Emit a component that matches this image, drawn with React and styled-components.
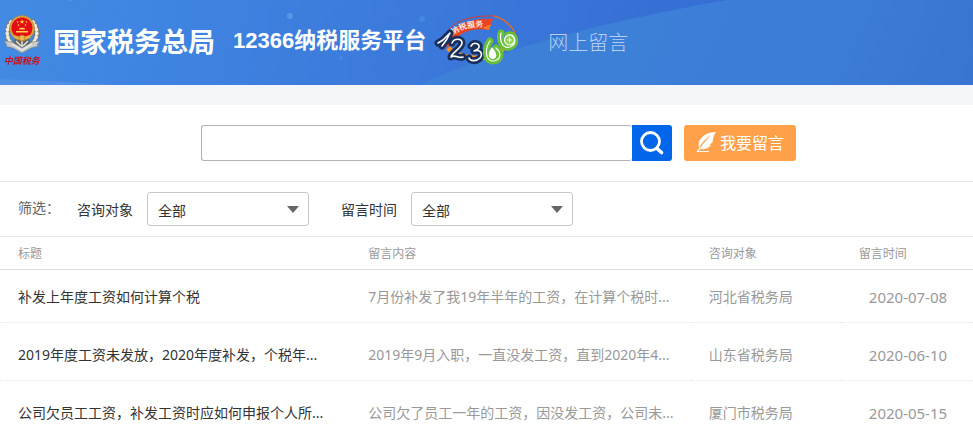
import React, { useState } from 'react'
import styled, { createGlobalStyle } from 'styled-components'

const GlobalStyle = createGlobalStyle`
    * {
        box-sizing: border-box;
    }

    body {
        margin: 0;
        background-color: #fff;
        color: #333;
        font-family: "Noto Sans", "Noto Sans CJK SC", sans-serif;
        font-size: 14px;
    }
`

const Header = styled.header`
    position: relative;
    display: flex;
    align-items: center;
    height: 85px;
    padding-bottom: 4px;
    overflow: hidden;
    background-color: #3c7edd;
`

// decoration behind the header content
const Waves = styled.svg`
    position: absolute;
    inset: 0;
    width: 100%;
    height: 100%;
`

const Brand = styled.a`
    position: relative;
    display: flex;
    align-items: center;
    padding-left: 3px;
    color: #fff;
    text-decoration: none;
    white-space: nowrap;
`

const Bureau = styled.span`
    margin-left: 12px;
    font-family: "Noto Sans CJK SC", sans-serif;
    font-size: 27px;
    font-weight: 700;
    line-height: 40px;
`

const Platform = styled.span`
    margin: 0 8px 0 18px;
    font-family: "Liberation Sans", "Noto Sans CJK SC", sans-serif;
    font-size: 22px;
    font-weight: 700;
    line-height: 40px;
`

const PageName = styled.h1`
    position: relative;
    margin: 0 0 0 28px;
    padding-top: 2px;
    color: #b4cff2;
    font-family: "Noto Sans CJK SC", sans-serif;
    font-size: 20px;
    font-weight: 300;
    line-height: 40px;
    white-space: nowrap;
`

const Main = styled.main`
    border-top: 20px solid #f4f5f8;
`

const SearchForm = styled.form`
    display: flex;
    justify-content: center;
    gap: 12px;
    padding: 20px 0 20px 24px;
    border-bottom: 1px solid #e4e4e4;
`

const SearchBox = styled.div`
    display: flex;
    width: 471px;
`

const SearchInput = styled.input`
    flex: 1;
    min-width: 0;
    height: 36px;
    padding: 0 10px;
    border: 1px solid #b2b2b2;
    border-right: 0;
    border-radius: 3px;
    background-color: #fff;
    font: inherit;
    outline: none;
`

const SearchButton = styled.button`
    width: 40px;
    height: 36px;
    padding: 0;
    border: 0;
    border-radius: 0 3px 3px 0;
    background-color: #0166ea;
    cursor: pointer;

    svg {
        display: block;
    }
`

const MessageButton = styled.button`
    display: flex;
    align-items: center;
    justify-content: center;
    gap: 3px;
    width: 112px;
    height: 36px;
    padding: 0 0 2px;
    border: 0;
    border-radius: 3px;
    background-color: #ffa04b;
    color: #fff;
    font-family: "Noto Sans CJK SC", sans-serif;
    font-size: 16px;
    line-height: 24px;
    cursor: pointer;
`

const Filters = styled.div`
    display: flex;
    align-items: center;
    height: 55px;
    padding: 0 18px;
    border-bottom: 1px solid #e4e4e4;
`

const FilterTitle = styled.span`
    margin-right: 17px;
    padding-bottom: 2px;
    color: #666;
    line-height: 20px;
`

const Field = styled.label`
    display: flex;
    align-items: center;
    gap: 14px;
    margin-right: 32px;
    line-height: 20px;
    white-space: nowrap;
`

const FieldName = styled.span`
    padding-top: 2px;
`

const SelectWrap = styled.span`
    position: relative;
    display: block;

    svg {
        position: absolute;
        top: 14px;
        right: 10px;
        pointer-events: none;
    }
`

const Select = styled.select`
    display: block;
    width: 162px;
    height: 34px;
    padding: 4px 30px 0 10px;
    border: 1px solid #c8c8c8;
    border-radius: 3px;
    background-color: #fff;
    color: #333;
    font: inherit;
    appearance: none;
`

const Table = styled.table`
    width: 100%;
    table-layout: fixed;
    border-collapse: separate;
    border-spacing: 0;
`

const Th = styled.th`
    width: ${props => props.$width};
    height: 33px;
    padding: 2px 0 0 18px;
    border-bottom: 1px solid #dcdcdc;
    color: #999;
    font-size: 12px;
    font-weight: 400;
    line-height: 20px;
    text-align: left;
`

const Td = styled.td`
    padding: 22px 0 15px 18px;
    border-bottom: 1px dotted #e8e8e8;
    color: #999;
    line-height: 20px;
    white-space: nowrap;

    tr:first-child > & {
        padding-top: 17px;
    }
`

const DateTd = styled(Td)`
    padding-left: 28px;
    font-size: 15px;
`

const TitleLink = styled.a`
    color: #333;
    text-decoration: none;

    &:hover {
        color: #0166ea;
    }
`

const messages = [
    {
        title: '补发上年度工资如何计算个税',
        content: '7月份补发了我19年半年的工资，在计算个税时...',
        target: '河北省税务局',
        date: '2020-07-08',
    },
    {
        title: '2019年度工资未发放，2020年度补发，个税年...',
        content: '2019年9月入职，一直没发工资，直到2020年4...',
        target: '山东省税务局',
        date: '2020-06-10',
    },
    {
        title: '公司欠员工工资，补发工资时应如何申报个人所...',
        content: '公司欠了员工一年的工资，因没发工资，公司未...',
        target: '厦门市税务局',
        date: '2020-05-15',
    },
]

function HeaderWaves() {
    return (
        <Waves viewBox="0 0 973 85" preserveAspectRatio="none" aria-hidden="true">
            <defs>
                <linearGradient id="sky" gradientUnits="userSpaceOnUse" x1="40" y1="-60" x2="600" y2="150">
                    <stop offset="0" stopColor="#428ae4" />
                    <stop offset="1" stopColor="#3770d5" />
                </linearGradient>
                <linearGradient id="hill" gradientUnits="userSpaceOnUse" x1="640" y1="0" x2="960" y2="140">
                    <stop offset="0" stopColor="#3d80d8" />
                    <stop offset="0.6" stopColor="#3b7cd6" />
                    <stop offset="1" stopColor="#3873d2" />
                </linearGradient>
            </defs>
            <rect width="973" height="85" fill="url(#sky)" />
            <path d="M418 85C500 50 600 22 728 0H973V85Z" fill="url(#hill)" />
            <path d="M0 79Q60 81 115 85H0Z" fill="#4f8fe5" />
            <g fill="#5aa2ec">
                <circle cx="290" cy="16" r="3" opacity="0.7" />
                <circle cx="422" cy="19" r="3" opacity="0.35" />
                <circle cx="341" cy="58" r="2" opacity="0.4" />
                <circle cx="70" cy="0" r="2" opacity="0.5" />
            </g>
        </Waves>
    )
}

// tax bureau emblem with the red lettering below it
function Emblem() {
    return (
        <svg width="38" height="54" viewBox="0 0 38 54" aria-hidden="true">
            <g fill="none" strokeLinecap="round">
                <path d="M8 8C2 16 3 27 12 32M30 8C36 16 35 27 26 32" stroke="#77766f" strokeWidth="5" />
                <path d="M8 8C2 16 3 27 12 32M30 8C36 16 35 27 26 32" stroke="#eeeade" strokeWidth="3.6" strokeDasharray="0.6 3.4" />
            </g>
            <path d="M12 24H26L28 33H10Z" fill="#5f625f" />
            <path d="M13 27l5 5M25 27l-5 5M19 26v7" stroke="#e5e1d3" strokeWidth="1.5" />
            <path d="M1 27l8 1 10 6 10-6 8-1-3 4 2 1-8 2-9 5-9-5-8-2 2-1z" fill="#c9cbc8" stroke="#777d80" strokeWidth="0.6" />
            <path d="M9 30l10 6 10-6" fill="none" stroke="#f1f0e9" strokeWidth="1.2" />
            <circle cx="19" cy="14" r="12.5" fill="#d6a73d" stroke="#a88445" strokeWidth="0.6" />
            <circle cx="19" cy="14" r="10.6" fill="#e60d12" />
            <path d="M19 5.5l.7 1.500 1.600.1-1.300 1 .5 1.600-1.500-1-1.500 1 .5-1.600-1.300-1 1.600-.1z" fill="#ffd64b" />
            <g fill="#ffd64b">
                <circle cx="14.5" cy="8" r="0.8" />
                <circle cx="23.5" cy="8" r="0.8" />
                <circle cx="15.5" cy="11" r="0.8" />
                <circle cx="22.5" cy="11" r="0.8" />
                <path d="M16 14.500l3-1 3 1v1h-6zM13 17h12v1.500H13z" />
            </g>
            <path d="M11 21q8 3 16 0v3q-8 3-16 0z" fill="#e7b040" />
            <circle cx="19" cy="24" r="3" fill="#e9b84b" stroke="#a37126" strokeWidth="0.6" />
            <text x="1" y="50" fill="#c71120" fontFamily="Noto Sans CJK SC, sans-serif" fontSize="9" fontWeight="700" fontStyle="italic">中国税务</text>
        </svg>
    )
}

// 12366 hotline logo
function HotlineLogo() {
    const digits = 'M4 28L9 25L16 18L13 24L8 31M18 28C20 23 28 23 28 28C28 33 17 38 17 42C21 39 25 44 29 42M37 31C40 26 48 29 44 34L40 36C47 34 49 39 46 43C42 47 36 46 35 43'
    const sixes = 'M56 26C51 33 51 45 58 46C67 46 68 38 62 33M67 18C65 26 69 34 76 32C84 29 81 18 74 20'

    return (
        <svg width="86" height="52" viewBox="0 0 86 52" aria-hidden="true">
            <path d="M10 24C14 8 32 0 62 1" fill="none" stroke="#d93b33" strokeWidth="1" />
            <path d="M60 1C70 4 77 9 81 18" fill="none" stroke="#e06a30" strokeWidth="1.5" />
            <path d="M10 32C9 14 34 2 59 4L55 15C38 12 22 18 17 31Z" fill="#ea4323" />
            <path d="M48 13L57 9L55 15Z" fill="#f47a30" />
            <path d="M14 33C24 44 52 47 67 36L76 24" fill="none" stroke="#ff8d16" strokeWidth="5" />
            <path d="M26 42C38 46 54 45 66 39" fill="none" stroke="#fff" strokeWidth="0.8" />
            <path id="ribbon" d="M19 20Q33 10 56 12" fill="none" />
            <text fill="#fff" fontFamily="Noto Sans CJK SC, sans-serif" fontSize="8" fontWeight="500">
                <textPath href="#ribbon">纳税服务</textPath>
            </text>
            <g fill="none" strokeLinecap="round" strokeLinejoin="round">
                <path d={digits} stroke="#172f5d" strokeWidth="7" />
                <path d={digits} stroke="#fff" strokeWidth="1.6" />
                <path d={sixes} stroke="#69bf36" strokeWidth="7" />
                <path d={sixes} stroke="#fff" strokeWidth="1.2" />
            </g>
            <path d="M58 32C53 39 54 44 59 44C64 43 63 38 58 32Z" fill="#fff" />
            <circle cx="75.5" cy="25" r="5" fill="#8bd254" stroke="#fff" strokeWidth="1.2" />
            <path d="M73 25h5M75.500 22.500v5" stroke="#fff" strokeWidth="1" />
        </svg>
    )
}

function SearchIcon() {
    return (
        <svg width="40" height="36" viewBox="0 0 40 36" fill="none" stroke="#fff" aria-hidden="true">
            <circle cx="18.5" cy="16.5" r="9" strokeWidth="2.8" />
            <path d="M25 23.500L29.500 27.500" strokeWidth="3.6" strokeLinecap="round" />
        </svg>
    )
}

function FeatherIcon() {
    return (
        <svg width="21" height="22" viewBox="0 0 21 22" fill="none" aria-hidden="true">
            <path d="M20 1C12 1 5 5 3 11C2 14 3 16 3 17C6 11 10 8 15 4C11 9 7 12 4 18C8 19 13 17 15 14L13.500 13.500L16.500 11.500C17 9 17 5 20 1Z" fill="#fff" />
            <path d="M4.500 16.500L1.500 20.500H13" stroke="#fff" strokeWidth="1.2" />
        </svg>
    )
}

function Dropdown({ label, options }) {
    const [value, setValue] = useState(options[0])

    return (
        <Field>
            <FieldName>{label}</FieldName>
            <SelectWrap>
                <Select value={value} onChange={(e) => setValue(e.target.value)}>
                    {options.map(option => <option key={option}>{option}</option>)}
                </Select>
                <svg width="12" height="7" viewBox="0 0 12 7" aria-hidden="true">
                    <path d="M0 0H12L6 7Z" fill="#666" />
                </svg>
            </SelectWrap>
        </Field>
    )
}

function App() {
    const [keyword, setKeyword] = useState('')

    return (
        <>
            <GlobalStyle />
            <Header>
                <HeaderWaves />
                <Brand href="#">
                    <Emblem />
                    <Bureau>国家税务总局</Bureau>
                    <Platform>12366纳税服务平台</Platform>
                    <HotlineLogo />
                </Brand>
                <PageName>网上留言</PageName>
            </Header>

            <Main>
                <SearchForm onSubmit={(e) => e.preventDefault()}>
                    <SearchBox>
                        <SearchInput
                            type="text"
                            aria-label="搜索"
                            value={keyword}
                            onChange={(e) => setKeyword(e.target.value)}
                        />
                        <SearchButton type="submit" aria-label="搜索">
                            <SearchIcon />
                        </SearchButton>
                    </SearchBox>
                    <MessageButton type="button">
                        <FeatherIcon />
                        我要留言
                    </MessageButton>
                </SearchForm>

                <Filters>
                    <FilterTitle>筛选：</FilterTitle>
                    <Dropdown label="咨询对象" options={['全部']} />
                    <Dropdown label="留言时间" options={['全部']} />
                </Filters>

                <Table>
                    <thead>
                        <tr>
                            <Th $width="36%">标题</Th>
                            <Th $width="35%">留言内容</Th>
                            <Th $width="150px">咨询对象</Th>
                            <Th>留言时间</Th>
                        </tr>
                    </thead>
                    <tbody>
                        {messages.map(item => (
                            <tr key={item.date}>
                                <Td><TitleLink href="#">{item.title}</TitleLink></Td>
                                <Td>{item.content}</Td>
                                <Td>{item.target}</Td>
                                <DateTd>{item.date}</DateTd>
                            </tr>
                        ))}
                    </tbody>
                </Table>
            </Main>
        </>
    )
}

export default App
